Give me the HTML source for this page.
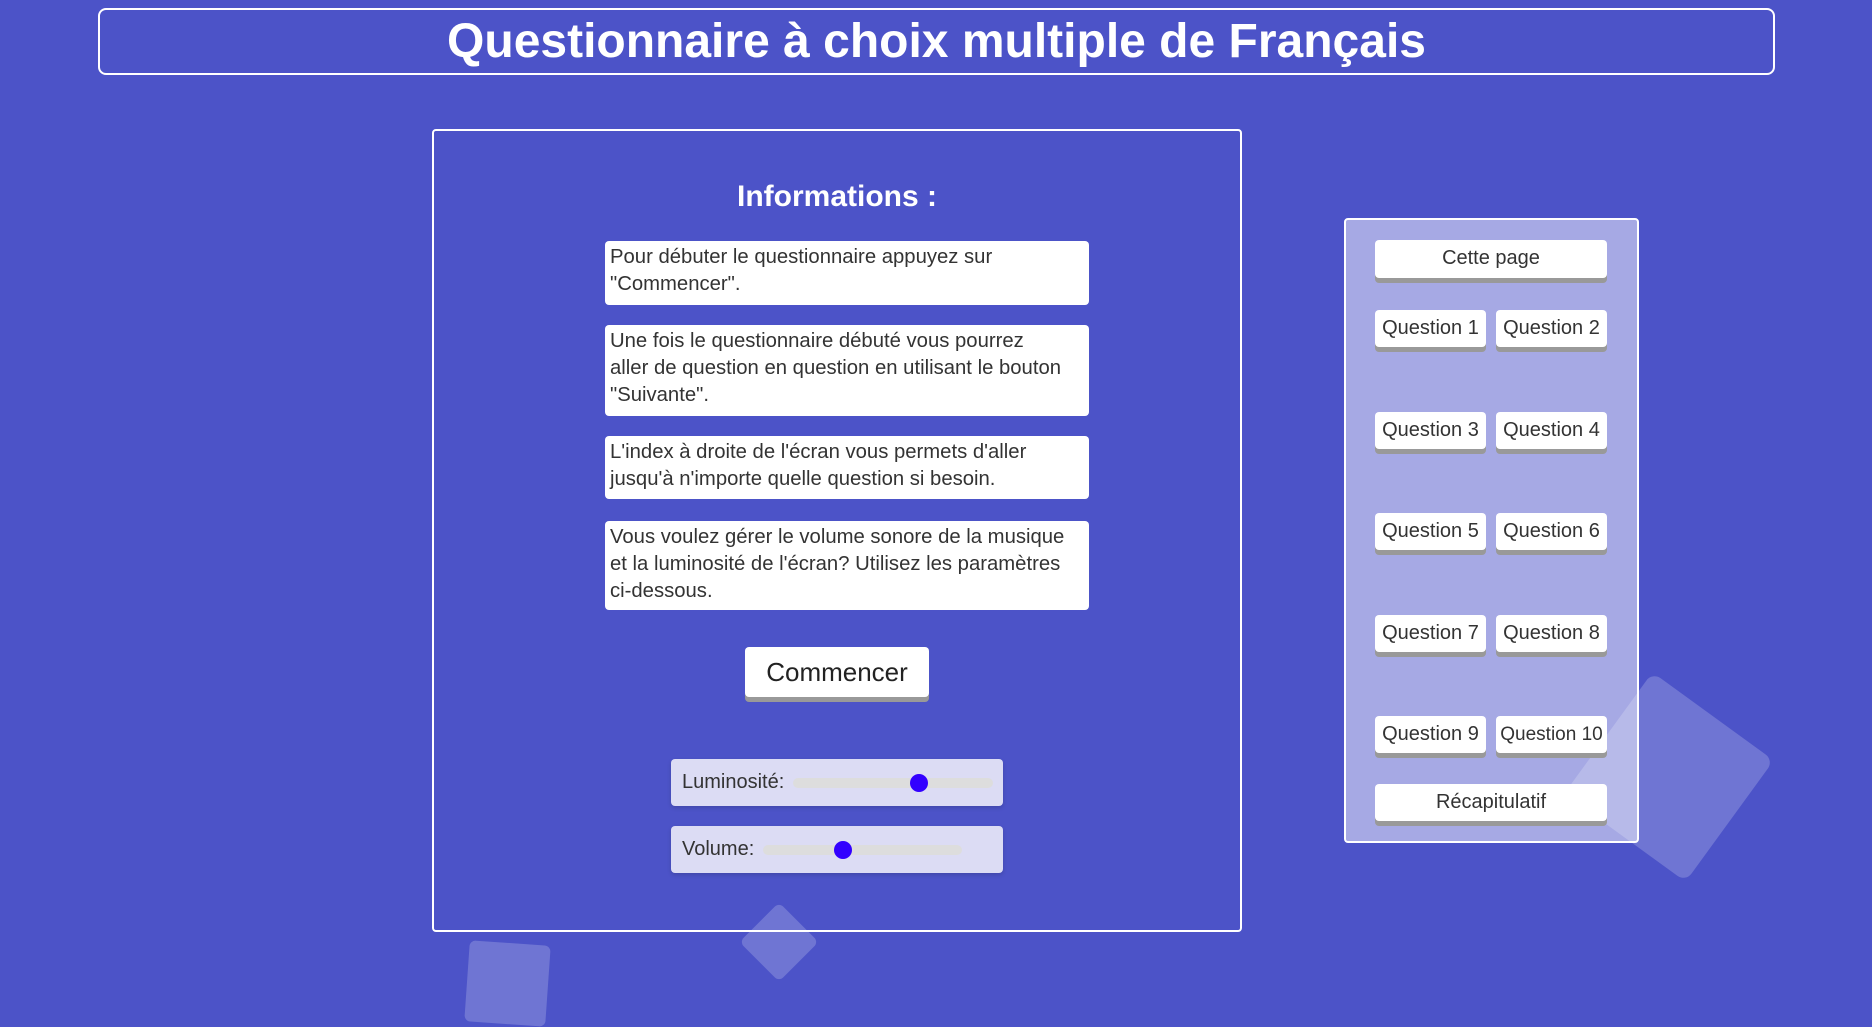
<!DOCTYPE html>
<html><head><meta charset="utf-8"><style>
*{box-sizing:border-box;margin:0;padding:0}
body{width:1872px;height:1003px;background:#4c53c8;font-family:"Liberation Sans",sans-serif;position:relative;overflow:hidden;color:#222}
.sq{position:absolute;background:rgba(255,255,255,0.2);border-radius:10px}
.hdr{position:absolute;left:98px;top:8px;width:1677px;height:67px;border:2px solid #fff;border-radius:8px;color:#fff;font-weight:bold;font-size:48px;text-align:center;line-height:63px}
.main{position:absolute;left:432px;top:129px;width:810px;height:803px;border:2px solid #fff;border-radius:4px}
.info{position:absolute;left:605px;width:484px;background:#fff;border-radius:4px;padding:3px 5px;font-size:20.3px;line-height:27px;color:#333;white-space:nowrap;overflow:hidden}
.btn{position:absolute;background:#fff;border-radius:4px;box-shadow:0 5px 0 #999;text-align:center;color:#333}
.rng{position:absolute;left:671px;width:332px;height:47px;background:#dcdcf4;border-radius:4px;font-size:20px;color:#333;padding-left:11px;line-height:47px;box-shadow:0 2px 4px rgba(0,0,0,0.15)}
.trk{position:absolute;height:10px;background:#ddd;border-radius:5px;top:19px}
.th{position:absolute;width:18px;height:18px;border-radius:50%;background:#3300ff;top:15px}
.side{position:absolute;left:1344px;top:218px;width:295px;height:625px;background:rgba(255,255,255,0.5);border:2px solid #fff;border-radius:4px}
.sb{font-size:20px;line-height:37px;height:37px}
</style></head><body>
<div class="sq" style="left:1594px;top:702px;width:150px;height:150px;transform:rotate(36deg)"></div>
<div class="sq" style="left:751px;top:914px;width:56px;height:56px;transform:rotate(45deg);border-radius:6px"></div>
<div class="sq" style="left:467px;top:943px;width:81px;height:81px;transform:rotate(4deg);border-radius:6px"></div>
<div class="hdr">Questionnaire à choix multiple de Français</div>
<div class="main"></div>
<div style="position:absolute;left:432px;width:810px;top:180px;text-align:center;color:#fff;font-weight:bold;font-size:30px">Informations :</div>
<div class="info" style="top:241px;height:64px">Pour débuter le questionnaire appuyez sur<br>"Commencer".</div>
<div class="info" style="top:325px;height:91px">Une fois le questionnaire débuté vous pourrez<br>aller de question en question en utilisant le bouton<br>"Suivante".</div>
<div class="info" style="top:436px;height:63px">L'index à droite de l'écran vous permets d'aller<br>jusqu'à n'importe quelle question si besoin.</div>
<div class="info" style="top:521px;height:89px">Vous voulez gérer le volume sonore de la musique<br>et la luminosité de l'écran? Utilisez les paramètres<br>ci-dessous.</div>
<div class="btn" style="left:745px;top:647px;width:184px;height:50px;line-height:50px;font-size:26px;color:#222">Commencer</div>
<div class="rng" style="top:759px">Luminosité:<div class="trk" style="left:122px;width:200px"></div><div class="th" style="left:239px"></div></div>
<div class="rng" style="top:826px">Volume:<div class="trk" style="left:92px;width:199px"></div><div class="th" style="left:163px"></div></div>
<div class="side"></div>
<div class="btn sb" style="left:1375px;top:240px;width:232px;height:38px">Cette page</div>
<div class="btn sb" style="left:1375px;top:310px;width:111px">Question 1</div>
<div class="btn sb" style="left:1496px;top:310px;width:111px">Question 2</div>
<div class="btn sb" style="left:1375px;top:412px;width:111px">Question 3</div>
<div class="btn sb" style="left:1496px;top:412px;width:111px">Question 4</div>
<div class="btn sb" style="left:1375px;top:513px;width:111px">Question 5</div>
<div class="btn sb" style="left:1496px;top:513px;width:111px">Question 6</div>
<div class="btn sb" style="left:1375px;top:615px;width:111px">Question 7</div>
<div class="btn sb" style="left:1496px;top:615px;width:111px">Question 8</div>
<div class="btn sb" style="left:1375px;top:716px;width:111px">Question 9</div>
<div class="btn sb" style="left:1496px;top:716px;width:111px;font-size:19px">Question 10</div>
<div class="btn sb" style="left:1375px;top:784px;width:232px">Récapitulatif</div>
</body></html>
